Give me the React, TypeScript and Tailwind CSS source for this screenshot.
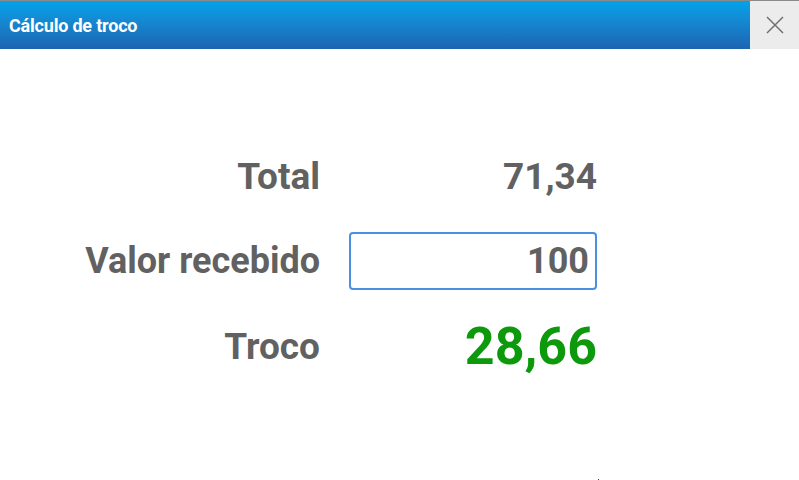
const font = { fontFamily: 'Roboto, "Noto Sans", sans-serif' };

export default function App() {
  return (
    <div className="w-[799px] h-[480px] bg-white overflow-hidden relative" style={font}>
      {/* title bar */}
      <div className="flex h-[49px] border-t border-[#8a8a8a]">
        <div className="flex-1 flex items-center pl-[9px] bg-gradient-to-b from-[#02a3e9] to-[#1c64b2]">
          <span className="text-white font-bold text-[18px] tracking-[-0.2px]">Cálculo de troco</span>
        </div>
        <button className="w-[49px] flex items-center justify-center bg-[#ececec]" aria-label="Fechar">
          <svg width="20" height="20" viewBox="0 0 20 20" fill="none" stroke="#6f6f6f" strokeWidth="1.5">
            <path d="M2 2L18 18M18 2L2 18" />
          </svg>
        </button>
      </div>

      {/* form */}
      <div className="grid grid-cols-[236px_248px] gap-x-[29px] pl-[84px] pt-[100px] items-center text-[#616161] font-bold whitespace-nowrap">
        <div className="text-right text-[37px] h-[56px] leading-[56px]">Total</div>
        <div className="text-right text-[37px] h-[56px] leading-[56px]">71,34</div>

        <div className="text-right text-[36px] leading-[56px] mt-[27px]">Valor recebido</div>
        <div className="mt-[27px] h-[58px] border-2 border-[#4a90e2] rounded-[4px] flex items-center justify-end pr-[6px] text-[36px]">
          100
        </div>

        <div className="text-right text-[37px] leading-[56px] mt-[29px]">Troco</div>
        <div className="text-right text-[52px] leading-[56px] mt-[29px] text-[#0c9a0c]">28,66</div>
      </div>

      <div className="absolute left-[598px] top-[479px] w-px h-px bg-[#2030c0]" />
    </div>
  );
}
